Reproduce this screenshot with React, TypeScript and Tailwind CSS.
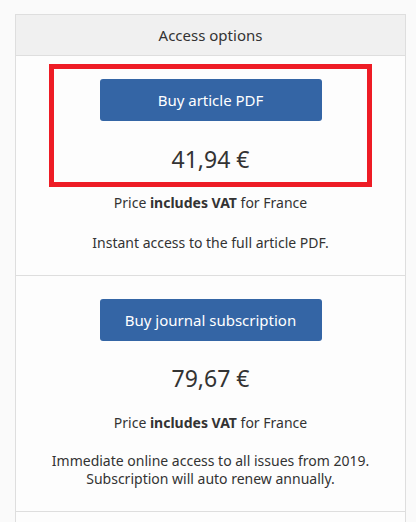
import React from "react";

const font = { fontFamily: '"Noto Sans", "Open Sans", sans-serif' };

function BuyButton({ label }: { label: string }) {
  return (
    <button className="w-[222px] h-[42px] rounded-[3px] bg-[#3465a5] text-white text-[15px] leading-none">
      {label}
    </button>
  );
}

function VatLine() {
  return (
    <p className="text-[14px] leading-[20px] text-[#333]">
      Price <b className="font-bold">includes VAT</b> for France
    </p>
  );
}

export default function App() {
  return (
    <div className="min-h-[522px] bg-[#fafafa] pt-[14px] px-[15px]" style={font}>
      <div className="w-[391px] border border-[#dedede] bg-[#fdfdfd]">
        <div className="h-[41px] bg-[#f0f0f0] border-b border-[#dedede] flex items-center justify-center text-[15px] text-[#333]">
          Access options
        </div>

        {/* single article */}
        <div className="flex flex-col items-center pt-[8px] pb-[22px] border-b border-[#dedede]">
          <div className="w-[323px] border-[5px] border-[#ee1c25] flex flex-col items-center pt-[10px] pb-[7px]">
            <BuyButton label="Buy article PDF" />
            <div className="mt-[22px] text-[23px] leading-[32px] text-[#333]">41,94 €</div>
          </div>
          <div className="mt-[6px]">
            <VatLine />
          </div>
          <p className="mt-[20px] text-[14px] leading-[20px] text-[#333]">
            Instant access to the full article PDF.
          </p>
        </div>

        {/* subscription */}
        <div className="flex flex-col items-center pt-[23px] pb-[23px] border-b border-[#dedede]">
          <BuyButton label="Buy journal subscription" />
          <div className="mt-[21px] text-[23px] leading-[32px] text-[#333]">79,67 €</div>
          <div className="mt-[19px]">
            <VatLine />
          </div>
          <p className="mt-[19px] text-[14px] leading-[18px] text-[#333] text-center">
            Immediate online access to all issues from 2019.
            <br />
            Subscription will auto renew annually.
          </p>
        </div>
        <div className="h-[40px]" />
      </div>
    </div>
  );
}
